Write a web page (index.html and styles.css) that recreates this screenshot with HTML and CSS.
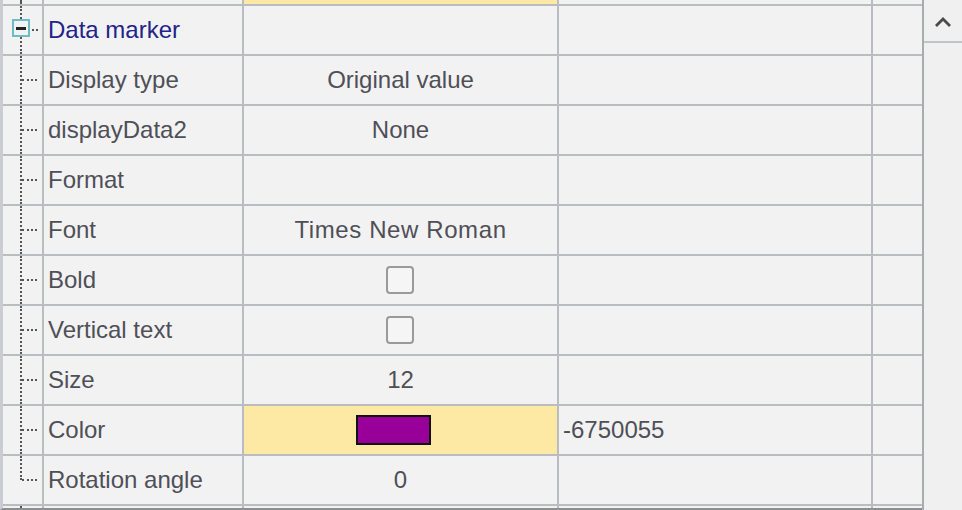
FILE: index.html
```html
<!DOCTYPE html>
<html>
<head>
<meta charset="utf-8">
<link rel="stylesheet" href="styles.css">
</head>
<body>
<div class="frame">
  <div class="table">
    <div class="grid">
      <div class="cell tree top"><span class="vline full"></span></div>
      <div class="cell top"></div>
      <div class="cell top yellow"></div>
      <div class="cell top"></div>
      <div class="cell top"></div>

      <div class="cell tree"><span class="vline full"></span><span class="box"><span class="minus"></span></span><span class="hline short"></span></div>
      <div class="cell name group">Data marker</div>
      <div class="cell"></div>
      <div class="cell"></div>
      <div class="cell"></div>

      <div class="cell tree"><span class="vline full"></span><span class="hline"></span></div>
      <div class="cell name">Display type</div>
      <div class="cell val">Original value</div>
      <div class="cell"></div>
      <div class="cell"></div>

      <div class="cell tree"><span class="vline full"></span><span class="hline"></span></div>
      <div class="cell name">displayData2</div>
      <div class="cell val">None</div>
      <div class="cell"></div>
      <div class="cell"></div>

      <div class="cell tree"><span class="vline full"></span><span class="hline"></span></div>
      <div class="cell name">Format</div>
      <div class="cell val"></div>
      <div class="cell"></div>
      <div class="cell"></div>

      <div class="cell tree"><span class="vline full"></span><span class="hline"></span></div>
      <div class="cell name">Font</div>
      <div class="cell val wide">Times New Roman</div>
      <div class="cell"></div>
      <div class="cell"></div>

      <div class="cell tree"><span class="vline full"></span><span class="hline"></span></div>
      <div class="cell name">Bold</div>
      <div class="cell val"><span class="check"></span></div>
      <div class="cell"></div>
      <div class="cell"></div>

      <div class="cell tree"><span class="vline full"></span><span class="hline"></span></div>
      <div class="cell name">Vertical text</div>
      <div class="cell val"><span class="check"></span></div>
      <div class="cell"></div>
      <div class="cell"></div>

      <div class="cell tree"><span class="vline full"></span><span class="hline"></span></div>
      <div class="cell name">Size</div>
      <div class="cell val">12</div>
      <div class="cell"></div>
      <div class="cell"></div>

      <div class="cell tree"><span class="vline full"></span><span class="hline"></span></div>
      <div class="cell name">Color</div>
      <div class="cell val yellow"><span class="swatch"></span></div>
      <div class="cell num">-6750055</div>
      <div class="cell"></div>

      <div class="cell tree"><span class="vline half"></span><span class="hline"></span></div>
      <div class="cell name">Rotation angle</div>
      <div class="cell val">0</div>
      <div class="cell"></div>
      <div class="cell"></div>

      <div class="cell tree bottom"><span class="vline full"></span></div>
      <div class="cell bottom"></div>
      <div class="cell bottom"></div>
      <div class="cell bottom"></div>
      <div class="cell bottom"></div>
    </div>
  </div>
  <div class="scrollbar">
    <div class="sb-btn">
      <svg width="20" height="12" viewBox="0 0 20 12"><path d="M3 10 L10 3 L17 10" fill="none" stroke="#4a4a4a" stroke-width="2.8"/></svg>
    </div>
    <div class="sb-track"></div>
  </div>
</div>
</body>
</html>
```

FILE: styles.css
```css
html, body {
  margin: 0;
  padding: 0;
  background: #f0f0f0;
}
body {
  width: 962px;
  height: 510px;
  overflow: hidden;
  font-family: "Liberation Sans", Arial, sans-serif;
}
.frame {
  display: flex;
  width: 962px;
  height: 510px;
  overflow: hidden;
}
.table {
  flex: 0 0 922px;
  height: 510px;
  overflow: hidden;
  background: #b9bdc1;
  border-left: 3px solid #c9ccd0;
  border-bottom: 2px solid #8c8f92;
  box-sizing: border-box;
}
.grid {
  display: grid;
  grid-template-columns: 39px 198px 313px 312px 50px;
  grid-template-rows: 4px repeat(10, 48px) 10px;
  gap: 2px;
  font-size: 24px;
  color: #4f4f58;
}
.cell {
  background: #f2f2f2;
  display: flex;
  align-items: center;
  white-space: nowrap;
  overflow: hidden;
  position: relative;
}
.yellow { background: #fde9a4; }
.name { padding-left: 4px; }
.group { color: #23238a; }
.val { justify-content: center; }
.wide { letter-spacing: 0.6px; }
.num { padding-left: 4px; }
.vline {
  position: absolute;
  left: 17px;
  width: 0;
  border-left: 2px dotted #555;
}
.vline.full { top: 0; bottom: 0; }
.vline.half { top: 0; height: 24px; }
.hline {
  position: absolute;
  left: 19px;
  top: 23px;
  width: 15px;
  border-top: 2px dotted #555;
}
.hline.short { left: 29px; width: 6px; }
.box {
  position: absolute;
  left: 9px;
  top: 13px;
  width: 14px;
  height: 14px;
  border: 2px solid #6cbcc8;
  background: #f2f2f2;
  display: flex;
  align-items: center;
  justify-content: center;
}
.minus {
  width: 10px;
  height: 3px;
  background: #222;
}
.check {
  width: 24px;
  height: 24px;
  border: 2px solid #9a9a9a;
  border-radius: 4px;
  background: #f5f5f5;
  margin-right: 2px;
}
.swatch {
  width: 71px;
  height: 26px;
  border: 2px solid #111;
  background: #990099;
  margin-right: 14px;
}
.scrollbar {
  flex: 1;
  display: flex;
  flex-direction: column;
  border-left: 2px solid #a8acb0;
  background: #f0f0f0;
}
.sb-btn {
  height: 38px;
  border-bottom: 2px solid #c2c5c8;
  margin-top: 3px;
  display: flex;
  align-items: center;
  justify-content: center;
}
.sb-track { flex: 1; }
```
